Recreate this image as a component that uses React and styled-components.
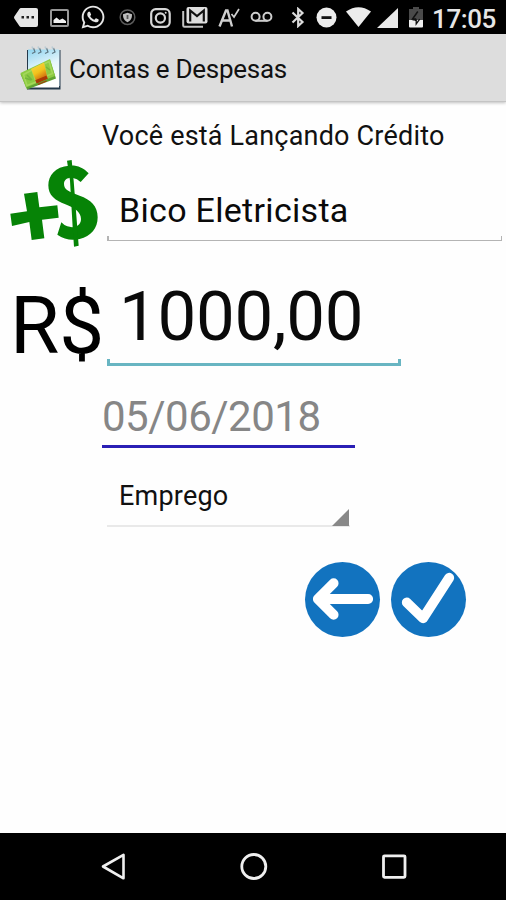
import styled, { createGlobalStyle } from 'styled-components';
import { FaWhatsapp } from 'react-icons/fa';

const GlobalStyle = createGlobalStyle`
  * {
    box-sizing: border-box;
  }
  body {
    margin: 0;
    background: #fefefe;
    font-family: Roboto, 'Liberation Sans', sans-serif;
    color: #111;
  }
`;

const Screen = styled.div`
  width: 506px;
  height: 900px;
  display: flex;
  flex-direction: column;
  overflow: hidden;
`;

// ---------------- Status bar ----------------
const StatusBar = styled.header`
  height: 34px;
  flex: none;
  display: flex;
  align-items: flex-start;
  background: #000;
  color: #e6e6e6;
  svg {
    display: block;
  }
`;

const Slot = styled.div`
  flex: none;
  width: ${(p) => p.$w}px;
  margin-left: ${(p) => p.$gap}px;
  padding-top: ${(p) => p.$top}px;
`;

const Clock = styled.span`
  margin-left: 9px;
  padding-top: 3px;
  font-size: 26px;
  line-height: 32px;
  font-weight: 500;
  letter-spacing: -0.4px;
  white-space: nowrap;
`;

// ---------------- Action bar ----------------
const ActionBar = styled.div`
  height: 68px;
  flex: none;
  display: flex;
  align-items: center;
  padding: 2px 0 0 20px;
  background: #dddddd;
  border-bottom: 1px solid #c4c4c4;
  box-shadow: 0 1px 3px rgba(0, 0, 0, 0.25);
`;

const AppTitle = styled.h1`
  margin: 0 0 0 7px;
  font-size: 26px;
  line-height: 32px;
  font-weight: 400;
  letter-spacing: -0.27px;
  white-space: nowrap;
`;

// ---------------- Form ----------------
const Form = styled.main`
  flex: 1;
  display: flex;
  flex-direction: column;
`;

const Heading = styled.div`
  margin: 18px 0 0 102px;
  font-size: 27px;
  line-height: 32px;
  letter-spacing: 0.2px;
  white-space: nowrap;
`;

const Row = styled.div`
  display: flex;
  align-items: flex-end;
  height: ${(p) => p.$h}px;
`;

const Side = styled.div`
  flex: none;
  width: 107px;
  white-space: nowrap;
  svg {
    display: block;
    margin-left: 10px;
  }
`;

const Currency = styled.span`
  display: block;
  margin-left: 10px;
  font-size: 80px;
  line-height: 80px;
  color: #000;
`;

// the small ticks at both ends of the underline
const Field = styled.div`
  position: relative;
  width: ${(p) => p.$w}px;
  height: ${(p) => p.$h}px;
  margin-bottom: ${(p) => p.$lift || 0}px;
  padding-left: ${(p) => p.$pad}px;
  border-bottom: ${(p) => p.$line}px solid ${(p) => p.$color};
  font-size: ${(p) => p.$size}px;
  line-height: ${(p) => p.$lh}px;
  letter-spacing: ${(p) => p.$ls || 0}px;
  color: #0a0a0a;
  white-space: nowrap;
  &::before,
  &::after {
    content: '';
    position: absolute;
    bottom: 0;
    width: ${(p) => p.$line}px;
    height: 4px;
    background: ${(p) => p.$color};
  }
  &::before {
    left: 0;
  }
  &::after {
    right: 0;
  }
`;

const DateField = styled.div`
  width: 253px;
  height: 55px;
  margin: 27px 0 0 102px;
  border-bottom: 3px solid #2a1fb5;
  font-size: 42px;
  line-height: 47px;
  letter-spacing: -0.5px;
  color: #868686;
  white-space: nowrap;
`;

const Spinner = styled.div`
  display: flex;
  justify-content: space-between;
  align-items: flex-end;
  width: 243px;
  height: 47px;
  margin: 32px 0 0 107px;
  padding-left: 12px;
  border-bottom: 2px solid #e9e9e9;
  font-size: 27px;
  line-height: 32px;
  letter-spacing: 0.2px;
  svg {
    display: block;
    margin-bottom: -2px;
  }
`;

const SpinnerText = styled.span`
  align-self: flex-start;
`;

const Actions = styled.div`
  display: flex;
  gap: 11px;
  margin: 35px 0 0 304.5px;
`;

const RoundButton = styled.button`
  width: 75px;
  height: 75px;
  padding: 0;
  border: 0;
  border-radius: 50%;
  background: #1273bf;
  svg {
    display: block;
  }
`;

// ---------------- Navigation bar ----------------
const NavBar = styled.nav`
  height: 67px;
  flex: none;
  display: flex;
  align-items: flex-start;
  padding: 19px 0 0 100px;
  gap: 112px;
  background: #000;
`;

const statusIcons = [
  {
    id: 'message', gap: 14, w: 24, top: 8,
    icon: (
      <svg width="24" height="19" viewBox="0 0 24 19">
        <path d="M7 0h15a2 2 0 0 1 2 2v15a2 2 0 0 1-2 2H7q-1 0-1.600-1L.3 10.500q-.5-1 0-2L5.400 1Q6 0 7 0z" fill="#e6e6e6" />
        <path d="M7.500 8h2.500v2.500h-2.500zM12.500 8h2.500v2.500h-2.500zM17.500 8h2.500v2.500h-2.500z" fill="#222" />
      </svg>
    ),
  },
  {
    id: 'image', gap: 12, w: 19, top: 9,
    icon: (
      <svg width="19" height="18" viewBox="0 0 19 18">
        <rect x="1" y="1" width="17" height="16" rx="1" fill="none" stroke="#989898" strokeWidth="2" />
        <path d="M3.500 14V11l3-2.500 3 2.500 3-1.500 3.500 2.500v2z" fill="#f0f0f0" />
      </svg>
    ),
  },
  { id: 'whatsapp', gap: 11, w: 26, top: 4, icon: <FaWhatsapp size={26} /> },
  {
    id: 'shield', gap: 13, w: 18, top: 9,
    icon: (
      <svg width="17" height="17" viewBox="0 0 17 17">
        <circle cx="8.500" cy="8.200" r="7.300" fill="none" stroke="#5c5c5c" strokeWidth="1.500" />
        <path d="M4 5.200l4.500-1.400L13 5.200c0 4-1 6.300-4.500 8C5 11.500 4 9.200 4 5.200z" fill="#bcbcbc" />
        <path d="M7.600 6h1.800v4H7.600z" fill="#555" />
      </svg>
    ),
  },
  {
    id: 'instagram', gap: 13, w: 21, top: 8,
    icon: (
      <svg width="21" height="20" viewBox="0 0 21 20" fill="none" stroke="#d6d6d6" strokeWidth="2.200">
        <rect x="1.200" y="1.200" width="18.500" height="17.600" rx="4.500" />
        <circle cx="10.400" cy="10" r="4.600" />
        <circle cx="15.700" cy="4.800" r="1" fill="#d6d6d6" stroke="none" />
      </svg>
    ),
  },
  {
    id: 'gmail', gap: 11, w: 26, top: 7,
    icon: (
      <svg width="26" height="21" viewBox="0 0 26 21">
        <path d="M1.200 4v14.500q0 1.200 1.200 1.200H21" fill="none" stroke="#c4c4c4" strokeWidth="2" />
        <rect x="4.500" y="0" width="21" height="16.500" rx="2" fill="#dedede" />
        <path d="M8.200 14.500V3.500L15 9l6.800-5.500v11" fill="none" stroke="#111" strokeWidth="2.200" />
      </svg>
    ),
  },
  {
    id: 'spelling', gap: 10, w: 22, top: 8,
    icon: (
      <svg width="22" height="20" viewBox="0 0 22 20" fill="none" stroke="#cfcfcf">
        <path d="M1.500 18.500L8 2.500h1.500L14 18.500M4.500 12.500h8.500" strokeWidth="2.400" />
        <path d="M13.500 6l2.500 3L21 1" strokeWidth="1.700" />
      </svg>
    ),
  },
  {
    id: 'voicemail', gap: 10, w: 23, top: 11,
    icon: (
      <svg width="23" height="12" viewBox="0 0 23 12" fill="none" stroke="#cdcdcd" strokeWidth="2">
        <circle cx="5.600" cy="5.700" r="4" />
        <circle cx="17.400" cy="5.700" r="4" />
        <path d="M5.600 9.800h11.800" />
      </svg>
    ),
  },
  {
    id: 'bluetooth', gap: 18, w: 14, top: 7,
    icon: (
      <svg width="14" height="21" viewBox="0 0 14 21" fill="none" stroke="#dcdcdc" strokeWidth="2.200">
        <path d="M1.500 5.500l10 9.500-4.300 4V2l4.300 4-10 9.500" />
      </svg>
    ),
  },
  {
    id: 'dnd', gap: 11, w: 21, top: 7,
    icon: (
      <svg width="21" height="21" viewBox="0 0 21 21">
        <circle cx="10.500" cy="10.500" r="10" fill="#ececec" />
        <path d="M5.500 9.200h10v2.800h-10z" fill="#111" />
      </svg>
    ),
  },
  {
    id: 'wifi', gap: 9, w: 25, top: 7,
    icon: (
      <svg width="25" height="20" viewBox="0 0 25 20">
        <path d="M0 4.500Q12.500-4 25 4.500L12.500 20z" fill="#ececec" />
      </svg>
    ),
  },
  {
    id: 'signal', gap: 6, w: 21, top: 8,
    icon: (
      <svg width="21" height="20" viewBox="0 0 21 20">
        <path d="M21 0v20H0z" fill="#e8e8e8" />
      </svg>
    ),
  },
  {
    id: 'battery', gap: 11, w: 14, top: 7,
    icon: (
      <svg width="14" height="21" viewBox="0 0 14 21">
        <path d="M4 0h6v2h4v12H0V2h4z" fill="#4a4a4a" />
        <path d="M0 13h14v6.500q0 1-1 1H1q-1 0-1-1z" fill="#f0f0f0" />
        <path d="M8.800 4.500L3.500 12h3v2" fill="none" stroke="#111" strokeWidth="1.500" />
        <path d="M3.500 12.800h3.700V17l3.500-4.800" fill="none" stroke="#111" strokeWidth="1.300" />
      </svg>
    ),
  },
];

// notepad with a bundle of bills in front
function NotepadIcon() {
  return (
    <svg width="42" height="46" viewBox="0 0 42 46">
      <defs>
        <linearGradient id="page" x1="0" y1="0" x2="0.3" y2="1">
          <stop offset="0" stopColor="#8ed3ee" />
          <stop offset="0.55" stopColor="#e6f6fc" />
          <stop offset="1" stopColor="#ffffff" />
        </linearGradient>
        <linearGradient id="band" x1="0" y1="0" x2="0.5" y2="1">
          <stop offset="0" stopColor="#f4e04e" />
          <stop offset="0.55" stopColor="#f2c21c" />
          <stop offset="1" stopColor="#c9570b" />
        </linearGradient>
      </defs>
      <path d="M7 4h33.500v39.500H7z" fill="#25384a" />
      <path d="M8 3.500h31V41.500H8z" fill="url(#page)" />
      <path d="M39.500 4v36" stroke="#7d93a3" strokeWidth="1" />
      <path d="M12 7.500l3-1.500-1.500-4M18 7.500l3-1.500-1.500-4M25 7.500l3-1.500-1.500-4M32 7.500l3-1.500-1.500-4" fill="none" stroke="#5d7682" strokeWidth="1.200" />
      <path d="M13 3l-1-2.500M19 3l-1-2.500M26 3l-1-2.500M33 3l-1-2.500" stroke="#b9cbd4" strokeWidth="1.500" />
      <path d="M.5 28L30 14l6 18.500L7 43.500z" fill="#5fa232" />
      <path d="M.5 27L30 13l5 17L6 41.500z" fill="#8ccb42" />
      <path d="M3.500 28.500L12 24l4 12-9 3.500zM24 18l5-2.500 3.500 12-6 2.500z" fill="none" stroke="#a5d75c" strokeWidth="1.500" />
      <path d="M5 32l6 2M26 21l4 3M7 29l5 5" stroke="#74b53c" strokeWidth="1.500" />
      <path d="M11 23l13-6.500 3.500 16L17 37z" fill="url(#band)" />
      <path d="M16 34.500l10-4 1 2-10 4.300zM18 38.500l8.500-3.500" fill="#a83a08" stroke="#a83a08" strokeWidth="1.200" />
    </svg>
  );
}

function PlusMoneyIcon() {
  return (
    <svg width="89" height="89" viewBox="30 132 267 267" fill="#068306">
      <path d="M72 236l40-5 6 46 54-6 4 37-50 6 7 56-38 5-7-54-52 12-5-37 50-7z" />
      <path d="M266 175C249 157 230 150 207 152C166 155 145 181 145 211C145 242 165 256 196 268C226 280 243 292 243 312C243 333 222 341 202 334Q192 331 184 322L172 359C193 374 215 377 239 372C273 364 293 340 293 307C293 272 272 254 239 242C207 231 192 224 192 207C192 193 203 187 217 188Q232 191 242 201Z" />
      <path d="M201 137l14-2 6 62 15 195-14 3-4-58-8-140z" />
    </svg>
  );
}

function App() {
  return (
    <>
      <GlobalStyle />
      <Screen>
        <StatusBar>
          {statusIcons.map((s) => (
            <Slot key={s.id} $gap={s.gap} $w={s.w} $top={s.top}>
              {s.icon}
            </Slot>
          ))}
          <Clock>17:05</Clock>
        </StatusBar>

        <ActionBar>
          <NotepadIcon />
          <AppTitle>Contas e Despesas</AppTitle>
        </ActionBar>

        <Form>
          <Heading>Você está Lançando Crédito</Heading>

          <Row $h={96}>
            <Side><PlusMoneyIcon /></Side>
            <Field $w={395} $h={55} $lift={7} $pad={12} $line={1.500} $color="#b4b4b4" $size={34} $lh={49} $ls={0.3}>
              Bico Eletricista
            </Field>
          </Row>

          <Row $h={118}>
            <Side><Currency>R$</Currency></Side>
            <Field $w={294} $h={91} $pad={12} $line={3} $color="#68b5c2" $size={69} $lh={84} $ls={-0.3}>
              1000,00
            </Field>
          </Row>

          <DateField>05/06/2018</DateField>

          <Spinner>
            <SpinnerText>Emprego</SpinnerText>
            <svg width="18" height="18" viewBox="0 0 18 18">
              <path d="M17 0v17H0z" fill="#888" />
            </svg>
          </Spinner>

          <Actions>
            <RoundButton aria-label="Voltar">
              <svg width="75" height="75" viewBox="0 0 76 76" fill="none" stroke="#fff" strokeWidth="10" strokeLinecap="round" strokeLinejoin="round">
                <path d="M64 37.500H14M29 21.500L13 37.500l16 16" />
              </svg>
            </RoundButton>
            <RoundButton aria-label="Confirmar">
              <svg width="75" height="75" viewBox="0 0 76 76" fill="none" stroke="#fff" strokeWidth="10" strokeLinecap="round" strokeLinejoin="round">
                <path d="M16 41l16.500 16L59 16" />
              </svg>
            </RoundButton>
          </Actions>
        </Form>

        <NavBar>
          <svg width="28" height="30" viewBox="0 0 28 30" fill="none" stroke="#efefef" strokeWidth="2.600" strokeLinejoin="round">
            <path d="M23.500 2.800v23.500L3 14.500z" />
          </svg>
          <svg width="28" height="30" viewBox="0 0 28 30" fill="none" stroke="#efefef" strokeWidth="2.800">
            <circle cx="13.800" cy="14.500" r="12" />
          </svg>
          <svg width="28" height="30" viewBox="0 0 28 30" fill="none" stroke="#efefef" strokeWidth="2.800">
            <rect x="3.500" y="3.800" width="21.500" height="21.500" rx="1" />
          </svg>
        </NavBar>
      </Screen>
    </>
  );
}

export default App;
